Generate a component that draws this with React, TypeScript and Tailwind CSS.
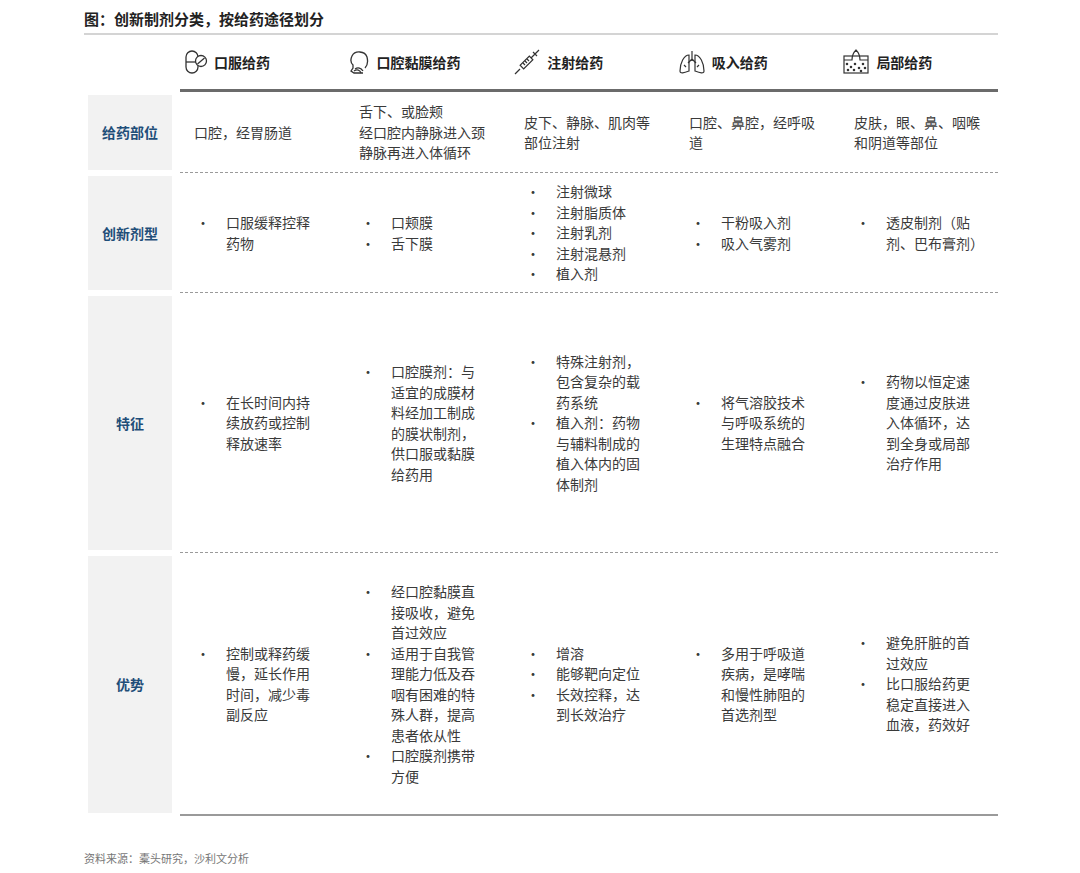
import React from "react";

const F = { fontFamily: '"Noto Sans CJK SC", "Noto Sans", sans-serif' };

const Pill = () => (
  <svg width="24" height="26" viewBox="0 0 24 26" fill="none" stroke="#333" strokeWidth="1.3">
    <path d="M2 12 V8 a6 6 0 0 1 12 0 V18 a6 6 0 0 1 -12 0 Z" />
    <line x1="2" y1="13" x2="14" y2="13" />
    <circle cx="17" cy="12" r="5.5" fill="#fff" />
    <line x1="13.5" y1="15" x2="20.5" y2="9" />
  </svg>
);
const Head = () => (
  <svg width="22" height="26" viewBox="0 0 22 26" fill="none" stroke="#333" strokeWidth="1.3">
    <path d="M16 19 C19 16 19 12 18 8 C16 2 6 1 3 7 C1 11 2 14 4 16 L4 19 L2 22 L5 24 L14 24" />
    <path d="M6 20 C9 18 12 19 14 22" />
    <path d="M5 22 C8 20 11 21 12 24" />
  </svg>
);
const Syringe = () => (
  <svg width="28" height="28" viewBox="0 0 28 28" fill="none" stroke="#333" strokeWidth="1.2">
    <path d="M2 26 L7 21" />
    <rect x="7" y="12" width="13" height="5" transform="rotate(-45 13.5 14.5)" />
    <path d="M18 10 L22 6 M20 4 L24 8 M22 6 L26 2" />
    <path d="M10 15 l2 2 M12 13 l2 2 M14 11 l2 2" />
  </svg>
);
const Lungs = () => (
  <svg width="28" height="26" viewBox="0 0 28 26" fill="none" stroke="#333" strokeWidth="1.2">
    <path d="M14 2 V12 M14 10 L10 14 M14 10 L18 14" />
    <path d="M11 6 C6 6 2 14 2 22 C2 25 6 24 11 22 Z" />
    <path d="M17 6 C22 6 26 14 26 22 C26 25 22 24 17 22 Z" />
    <path d="M6 16 l2 2 M21 16 l-2 2" />
  </svg>
);
const Skin = () => (
  <svg width="28" height="26" viewBox="0 0 28 26" fill="none" stroke="#333" strokeWidth="1.2">
    <rect x="2" y="7" width="24" height="17" />
    <path d="M2 11 H10 C10 6 13 2 14 1 C15 2 18 6 18 11 H26" />
    {[[5,15],[9,18],[13,15],[17,19],[21,15],[6,21],[12,21],[19,22],[23,19]].map(([x,y],i)=>(<circle key={i} cx={x} cy={y} r="0.7" fill="#333"/>))}
  </svg>
);

const headers = [
  [<Pill />, "口服给药"],
  [<Head />, "口腔黏膜给药"],
  [<Syringe />, "注射给药"],
  [<Lungs />, "吸入给药"],
  [<Skin />, "局部给药"],
] as const;

type Cell = { t?: string[]; b?: string[][] };
const rows: { label: string; h: string; cells: Cell[] }[] = [
  { label: "给药部位", h: "h-[81px]", cells: [
    { t: ["口腔，经胃肠道"] },
    { t: ["舌下、或脸颊", "经口腔内静脉进入颈", "静脉再进入体循环"] },
    { t: ["皮下、静脉、肌肉等", "部位注射"] },
    { t: ["口腔、鼻腔，经呼吸", "道"] },
    { t: ["皮肤，眼、鼻、咽喉", "和阴道等部位"] },
  ]},
  { label: "创新剂型", h: "h-[120px]", cells: [
    { b: [["口服缓释控释", "药物"]] },
    { b: [["口颊膜"], ["舌下膜"]] },
    { b: [["注射微球"], ["注射脂质体"], ["注射乳剂"], ["注射混悬剂"], ["植入剂"]] },
    { b: [["干粉吸入剂"], ["吸入气雾剂"]] },
    { b: [["透皮制剂（贴", "剂、巴布膏剂）"]] },
  ]},
  { label: "特征", h: "h-[260px]", cells: [
    { b: [["在长时间内持", "续放药或控制", "释放速率"]] },
    { b: [["口腔膜剂：与", "适宜的成膜材", "料经加工制成", "的膜状制剂，", "供口服或黏膜", "给药用"]] },
    { b: [["特殊注射剂，", "包含复杂的载", "药系统"], ["植入剂：药物", "与辅料制成的", "植入体内的固", "体制剂"]] },
    { b: [["将气溶胶技术", "与呼吸系统的", "生理特点融合"]] },
    { b: [["药物以恒定速", "度通过皮肤进", "入体循环，达", "到全身或局部", "治疗作用"]] },
  ]},
  { label: "优势", h: "h-[263px]", cells: [
    { b: [["控制或释药缓", "慢，延长作用", "时间，减少毒", "副反应"]] },
    { b: [["经口腔黏膜直", "接吸收，避免", "首过效应"], ["适用于自我管", "理能力低及吞", "咽有困难的特", "殊人群，提高", "患者依从性"], ["口腔膜剂携带", "方便"]] },
    { b: [["增溶"], ["能够靶向定位"], ["长效控释，达", "到长效治疗"]] },
    { b: [["多用于呼吸道", "疾病，是哮喘", "和慢性肺阻的", "首选剂型"]] },
    { b: [["避免肝脏的首", "过效应"], ["比口服给药更", "稳定直接进入", "血液，药效好"]] },
  ]},
];

const widths = ["w-[165px]", "w-[165px]", "w-[165px]", "w-[165px]", "w-[158px]"];

export default function App() {
  return (
    <div className="w-[1080px] h-[873px] bg-white text-[#3a3a3a]" style={F}>
      <div className="px-[84px] pt-[7px]">
        <div className="text-[15px] font-bold text-[#222] h-[26px] leading-[24px]">图：创新制剂分类，按给药途径划分</div>
        <div className="border-t-2 border-[#d4d4d4] w-[914px]" />
        <div className="flex ml-[96px] h-[54px] items-center">
          {headers.map(([ic, t], i) => (
            <div key={i} className={`${widths[i]} flex items-center gap-1.5 pl-[4px]`}>
              {ic}
              <span className="text-[14px] font-bold text-[#222]">{t}</span>
            </div>
          ))}
        </div>
        <div className="ml-[96px] w-[818px] border-t-[3px] border-[#6b6b6b]" />
        {rows.map((r, ri) => (
          <div key={ri} className={`flex ${r.h}`}>
            <div className="w-[96px] pl-[4px] pr-[8px] py-[3px]">
              <div className="h-full w-[84px] bg-[#f2f2f2] flex items-center justify-center text-[14px] font-bold text-[#1f4e79]">{r.label}</div>
            </div>
            <div className={`flex w-[818px] ${ri < rows.length - 1 ? "border-b border-dashed border-[#9a9a9a]" : "border-b-2 border-[#9a9a9a]"}`}>
              {r.cells.map((c, ci) => (
                <div key={ci} className={`${widths[ci]} flex flex-col justify-center text-[14px] leading-[20.5px] pl-[14px]`}>
                  {c.t && c.t.map((l, li) => <div key={li}>{l}</div>)}
                  {c.b && c.b.map((bl, bi) => (
                    <div key={bi} className="flex">
                      <span className="w-[32px] pl-[2px]">•</span>
                      <div>{bl.map((l, li) => <div key={li}>{l}</div>)}</div>
                    </div>
                  ))}
                </div>
              ))}
            </div>
          </div>
        ))}
        <div className="mt-[34px] text-[11px] text-[#777]">资料来源：橐头研究，沙利文分析</div>
      </div>
    </div>
  );
}
